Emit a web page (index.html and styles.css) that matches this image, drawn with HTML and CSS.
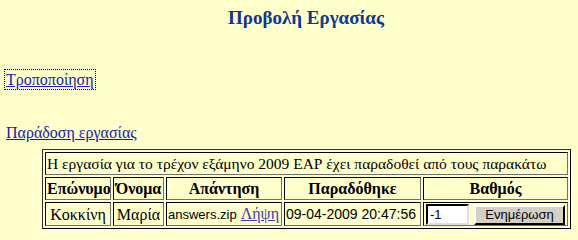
FILE: index.html
```html
<!DOCTYPE html>
<html>
<head>
<meta charset="utf-8">
<link rel="stylesheet" href="styles.css">
</head>
<body>
<div class="page">
  <h1 class="title">Προβολή Εργασίας</h1>
  <div class="link-row edit-row"><a href="#" class="link focused">Τροποποίηση</a></div>
  <div class="link-row submit-row"><a href="#" class="link">Παράδοση εργασίας</a></div>
  <table class="grid">
    <colgroup>
      <col class="c1"><col class="c2"><col class="c3"><col class="c4"><col class="c5">
    </colgroup>
    <tr>
      <td colspan="5" class="cap">Η εργασία για το τρέχον εξάμηνο 2009 ΕΑΡ έχει παραδοθεί από τους παρακάτω</td>
    </tr>
    <tr class="head">
      <th>Επώνυμο</th>
      <th>Όνομα</th>
      <th>Απάντηση</th>
      <th>Παραδόθηκε</th>
      <th>Βαθμός</th>
    </tr>
    <tr class="data">
      <td class="center">Κοκκίνη</td>
      <td class="center">Μαρία</td>
      <td><span class="sans file">answers.zip</span> <a href="#" class="dl">Λήψη</a></td>
      <td class="sans">09-04-2009 20:47:56</td>
      <td class="grade"><input class="field" type="text" value="-1"><button class="btn" type="button">Ενημέρωση</button></td>
    </tr>
  </table>
</div>
</body>
</html>
```
FILE: styles.css
```css
html, body {
  margin: 0;
  padding: 0;
  background: #ffffcc;
}
body {
  font-family: "Liberation Serif", "Times New Roman", serif;
  font-size: 16px;
  color: #000;
}
.page {
  box-sizing: border-box;
  width: 100%;
  padding: 6px 0 0 6px;
}
.title {
  margin: 0;
  padding-left: 28px;
  font-size: 19px;
  line-height: 23px;
  font-weight: bold;
  color: #0d3890;
  text-align: center;
}
.link-row {
  line-height: 18px;
}
.edit-row {
  margin-top: 42px;
}
.submit-row {
  margin-top: 35px;
}
.link {
  color: #1a1ab0;
  text-decoration: underline;
}
.focused {
  outline: 1px dotted #000;
  outline-offset: 1px;
}
.grid {
  width: 529px;
  table-layout: fixed;
  margin: 7px 0 0 36px;
  border-collapse: separate;
  border-spacing: 2px;
  border: 1px solid #303030;
  border-right-color: #000;
  border-bottom-color: #000;
}
.c1 { width: 66px; }
.c2 { width: 51px; }
.c3 { width: 116px; }
.c4 { width: 137px; }
.c5 { width: 145px; }
.grid td, .grid th {
  border: 1px solid #000;
  border-right-color: #707070;
  border-bottom-color: #707070;
  padding: 1px;
  height: 19px;
  line-height: 19px;
  white-space: nowrap;
  overflow: hidden;
}
.cap {
  text-align: left;
  font-size: 15.5px;
}
.head th {
  font-weight: bold;
  text-align: center;
}
.center {
  text-align: center;
}
.sans {
  font-family: "Liberation Sans", Arial, sans-serif;
  font-size: 14px;
}
.file {
  font-size: 13px;
}
.dl {
  color: #3c3cb4;
}
.data td {
  height: 21px;
  line-height: 21px;
  padding: 0 1px;
}
.field {
  box-sizing: border-box;
  width: 43px;
  height: 21px;
  margin: 0 5px 0 1px;
  padding: 1px 2px;
  border: 2px inset #808080;
  border-top-color: #404040;
  border-left-color: #404040;
  border-right-color: #e0e0e0;
  border-bottom-color: #e0e0e0;
  background: #fff;
  font-family: "Liberation Sans", Arial, sans-serif;
  font-size: 13px;
  vertical-align: top;
}
.btn {
  box-sizing: border-box;
  width: 91px;
  height: 20px;
  margin-top: 1px;
  padding: 0;
  background: #d4d0c8;
  border: 2px outset #d4d0c8;
  border-top-color: #fff;
  border-left-color: #fff;
  border-right-color: #404040;
  border-bottom-color: #404040;
  font-family: "Liberation Sans", Arial, sans-serif;
  font-size: 13px;
  color: #000;
  vertical-align: top;
}
```
